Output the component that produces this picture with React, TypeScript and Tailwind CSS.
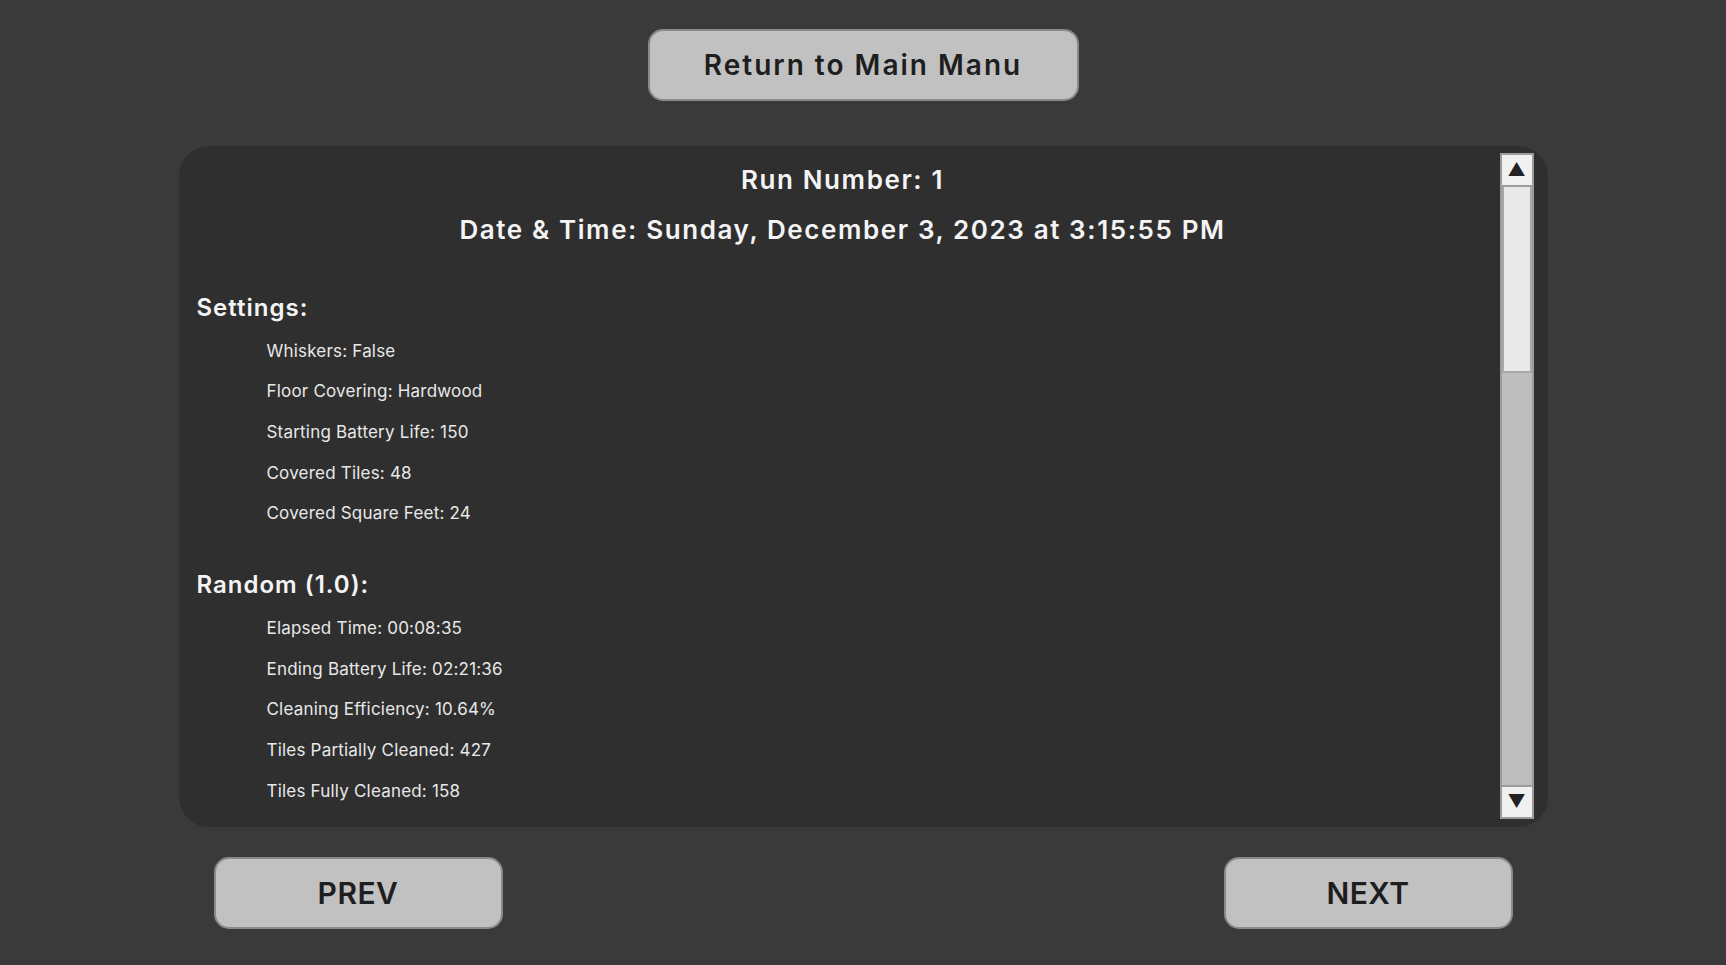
import React from 'react';

const settings = [
    'Whiskers: False',
    'Floor Covering: Hardwood',
    'Starting Battery Life: 150',
    'Covered Tiles: 48',
    'Covered Square Feet: 24',
];

const results = [
    'Elapsed Time: 00:08:35',
    'Ending Battery Life: 02:21:36',
    'Cleaning Efficiency: 10.64%',
    'Tiles Partially Cleaned: 427',
    'Tiles Fully Cleaned: 158',
];

function GreyButton({ label, className }: { label: string; className: string }) {
    return (
        <button
            className={`h-[72px] rounded-[15px] border-2 border-[#8a8a8a] bg-[#c1c1c1] text-[#1e1e1e] ${className}`}
        >
            {label}
        </button>
    );
}

function Section({ title, items, className }: { title: string; items: string[]; className: string }) {
    return (
        <div className={className}>
            <h2 className="mb-[2px] text-[24px] font-semibold leading-[42px] tracking-[1px] text-[#f4f4f4]">{title}</h2>
            <ul className="pl-[70px]">
                {items.map((item) => (
                    <li key={item} className="text-[17px] leading-[40.7px] tracking-[0.2px] text-[#e8e8e8]">
                        {item}
                    </li>
                ))}
            </ul>
        </div>
    );
}

function ScrollBar() {
    return (
        <div className="flex w-[34px] flex-col border-2 border-[#9c9c9c] bg-[#bdbdbd]">
            <div className="flex h-[32px] items-center justify-center border-b-2 border-[#9c9c9c] bg-[#f0f0f0] text-[18px] leading-none text-[#222]">
                ▲
            </div>
            <div className="h-[186px] border-x-2 border-b-2 border-[#a8a8a8] bg-[#e9e9e9]" />
            <div className="flex-1" />
            <div className="flex h-[32px] items-center justify-center border-t-2 border-[#9c9c9c] bg-[#f0f0f0] text-[18px] leading-none text-[#222]">
                ▼
            </div>
        </div>
    );
}

export default function App() {
    return (
        <div className="flex h-[965px] w-[1726px] flex-col items-center bg-[#3a3a3a] pt-[29px] font-['Inter',sans-serif]">
            <GreyButton label="Return to Main Manu" className="w-[431px] text-[28px] font-semibold tracking-[2px]" />

            {/* Run details panel */}
            <div className="mt-[45px] flex h-[681px] w-[1369px] rounded-[30px] bg-[#2f2f2f] pb-[8px] pr-[14px] pt-[7px]">
                <div className="flex-1 pl-[18px] pt-[1.5px]">
                    <div className="pr-[11px] text-center text-[26px] font-semibold leading-[50px] tracking-[1.6px] text-[#f4f4f4]">
                        <p>Run Number: 1</p>
                        <p>Date &amp; Time: Sunday, December 3, 2023 at 3:15:55 PM</p>
                    </div>
                    <Section title="Settings:" items={settings} className="mt-[32px]" />
                    <Section title="Random (1.0):" items={results} className="mt-[30px]" />
                </div>
                <ScrollBar />
            </div>

            <div className="mt-[30px] flex w-[1369px] justify-between px-[35px]">
                <GreyButton label="PREV" className="w-[289px] text-[30px] font-semibold tracking-[0.5px]" />
                <GreyButton label="NEXT" className="w-[289px] text-[30px] font-semibold tracking-[0.5px]" />
            </div>
        </div>
    );
}
